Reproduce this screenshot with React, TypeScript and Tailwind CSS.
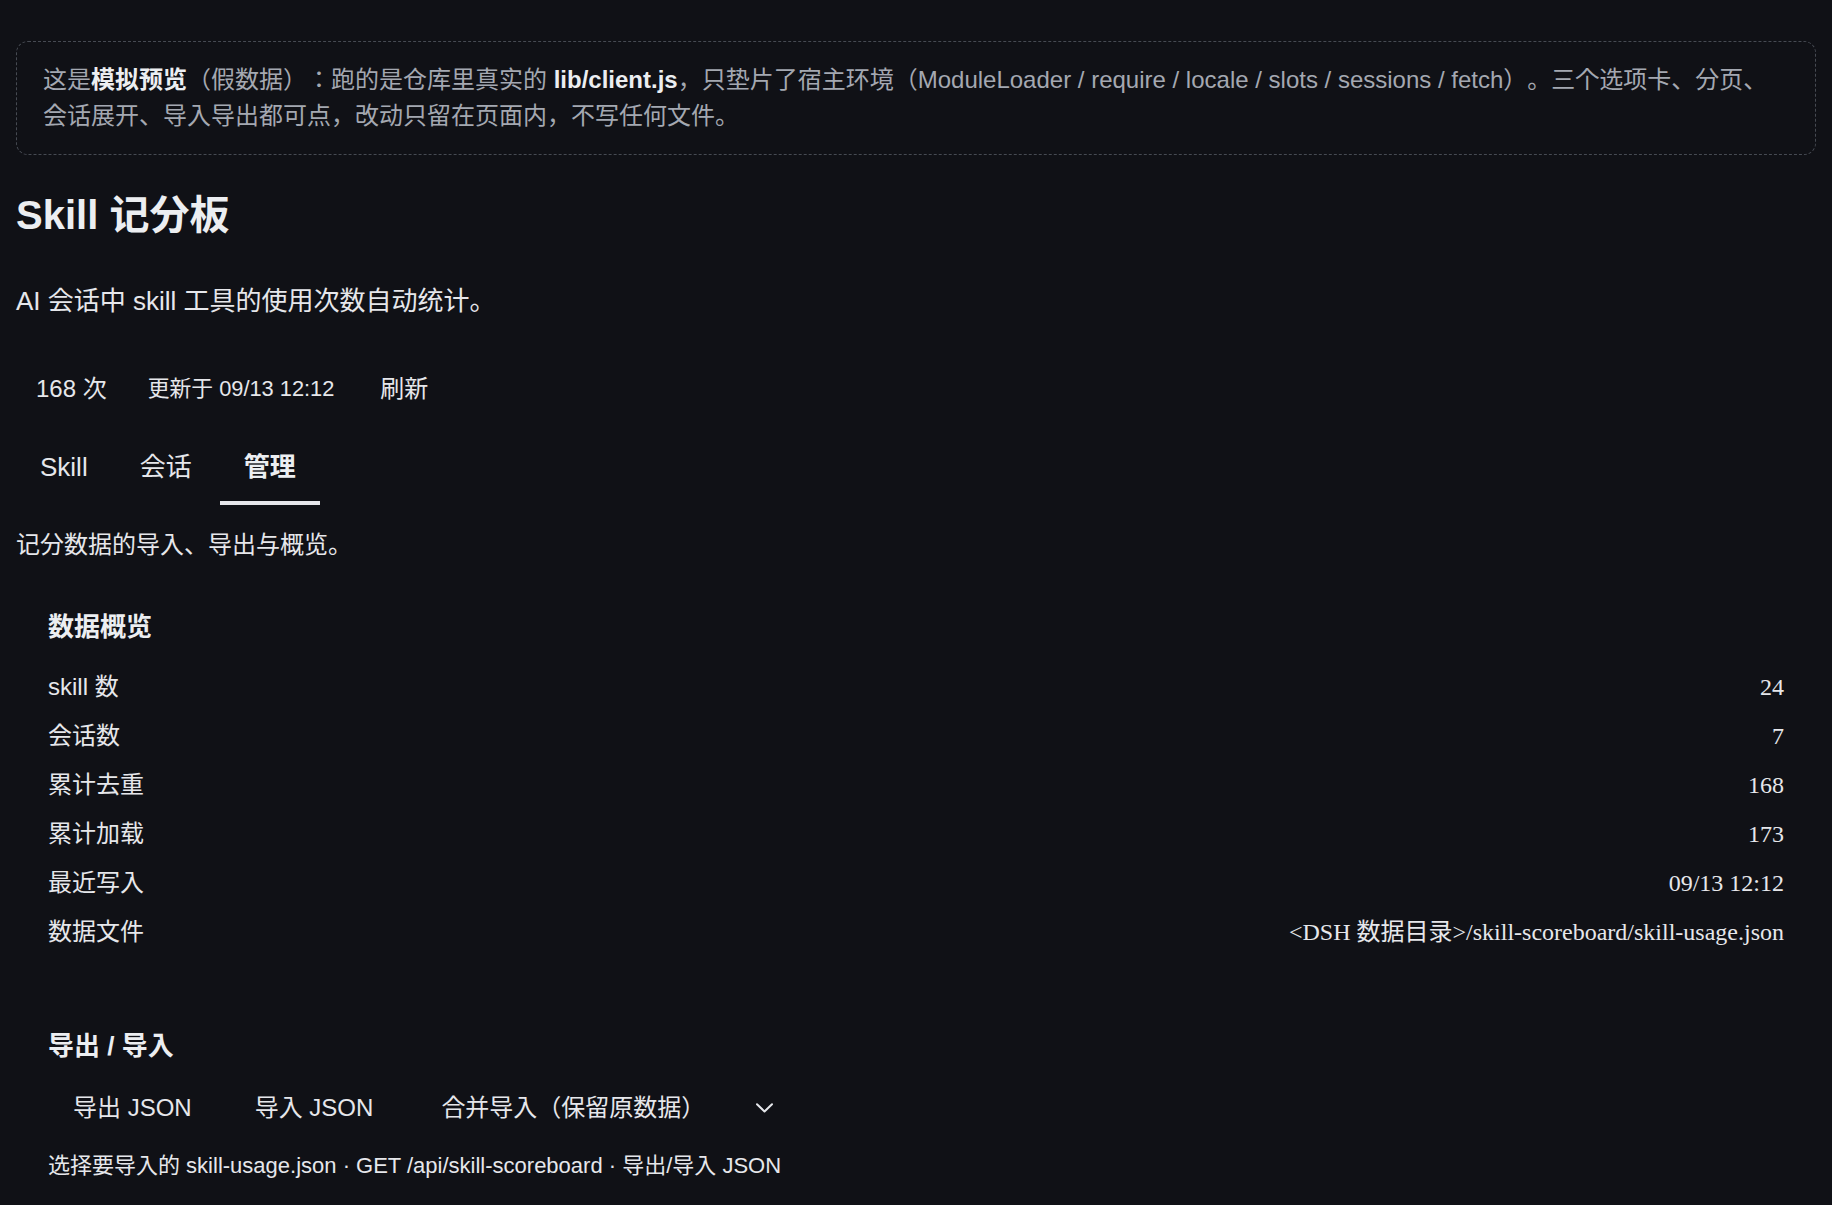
import { useState } from "react";

const overview: [string, string][] = [
  ["skill 数", "24"],
  ["会话数", "7"],
  ["累计去重", "168"],
  ["累计加载", "173"],
  ["最近写入", "09/13 12:12"],
  ["数据文件", "<DSH 数据目录>/skill-scoreboard/skill-usage.json"],
];

const tabs = ["Skill", "会话", "管理"];

function Chevron() {
  return (
    <svg width="17" height="10" viewBox="0 0 17 10" fill="none" className="shrink-0">
      <path d="M1 1.2 L8.5 8.5 L16 1.2" stroke="#e5e7eb" strokeWidth="2" strokeLinecap="round" strokeLinejoin="round" />
    </svg>
  );
}

export default function App() {
  const [tab, setTab] = useState(2);

  return (
    <div className="min-h-screen bg-[#101116] px-4 pt-[41px] pb-10 text-[24px] text-[#e6e7eb] [text-spacing-trim:space-all] font-['Liberation_Sans','Noto_Sans_CJK_JP',sans-serif]">
      {/* notice */}
      <div className="rounded-xl border border-dashed border-[#464a52] px-[26px] py-[20px] leading-[36px] text-[#a4a8b1]">
        这是<b className="font-bold text-[#eceef1]">模拟预览</b>（假数据）：跑的是仓库里真实的{" "}
        <b className="font-bold text-[#eceef1]">lib/client.js</b>，只垫片了宿主环境（ModuleLoader / require / locale / slots / sessions / fetch）。三个选项卡、分页、会话展开、导入导出都可点，改动只留在页面内，不写任何文件。
      </div>

      <h1 className="mt-[36px] text-[40px] font-bold leading-[48px] text-[#eceef1]">Skill 记分板</h1>
      <p className="mt-[44px] text-[26px] leading-[36px]">AI 会话中 skill 工具的使用次数自动统计。</p>

      {/* meta */}
      <div className="mt-[52px] flex items-center leading-[36px]">
        <span className="px-[20px]">168 次</span>
        <span className="px-[21px] text-[21.8px]">更新于 09/13 12:12</span>
        <button className="ml-[4px] px-[21px]">刷新</button>
      </div>

      {/* tabs */}
      <div className="mt-[26px] flex gap-[4px]">
        {tabs.map((t, i) => (
          <button
            key={t}
            onClick={() => setTab(i)}
            className={
              i === tab
                ? "border-b-4 border-[#e6e7eb] px-[24px] pt-[16px] pb-[16px] text-[26px] font-bold leading-[36px] text-[#eceef1]"
                : "border-b-4 border-transparent px-[24px] pt-[16px] pb-[16px] text-[26px] leading-[36px]"
            }
          >
            {t}
          </button>
        ))}
      </div>

      <p className="mt-[22px] leading-[36px]">记分数据的导入、导出与概览。</p>

      {/* overview */}
      <section className="mt-[46px] px-8">
        <h3 className="text-[26px] font-bold leading-[36px] text-[#eceef1]">数据概览</h3>
        <div className="mt-[17px] flex flex-col">
          {overview.map(([k, v]) => (
            <div key={k} className="flex h-[49px] items-center justify-between">
              <span className="leading-[36px]">{k}</span>
              <span className="leading-[36px] font-['Liberation_Serif','Noto_Sans_CJK_JP',serif]">{v}</span>
            </div>
          ))}
        </div>
      </section>

      {/* export / import */}
      <section className="mt-[72px] px-8">
        <h3 className="text-[26px] font-bold leading-[36px] text-[#eceef1]">导出 / 导入</h3>
        <div className="mt-[22px] flex h-[44px] items-center gap-[13px]">
          <button className="px-[25px] leading-[36px]">导出 JSON</button>
          <button className="px-[25px] leading-[36px]">导入 JSON</button>
          <div className="flex items-center gap-[51px] pl-[30px] pr-[10px] leading-[36px]">
            <span>合并导入（保留原数据）</span>
            <Chevron />
          </div>
        </div>
        <p className="mt-[19px] text-[22px] leading-[34px]">
          选择要导入的 skill-usage.json · GET /api/skill-scoreboard · 导出/导入 JSON
        </p>
      </section>
    </div>
  );
}
